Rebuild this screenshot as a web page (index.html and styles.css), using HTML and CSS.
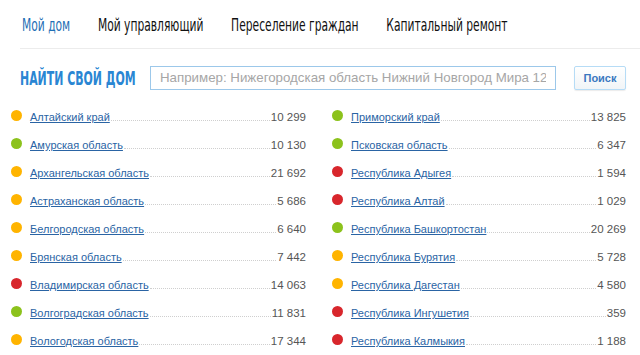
FILE: index.html
```html
<!DOCTYPE html>
<html lang="ru">
<head>
    <meta charset="utf-8">
    <title>Реформа ЖКХ</title>
    <link rel="stylesheet" href="styles.css">
</head>
<body>
    <nav class="topMenu">
        <div class="menuList">
            <a class="menuItem active" href="#">Мой дом</a>
            <a class="menuItem" href="#">Мой управляющий</a>
            <a class="menuItem" href="#">Переселение граждан</a>
            <a class="menuItem" href="#">Капитальный ремонт</a>
        </div>
    </nav>

    <div class="searchBar">
        <div class="searchTitleBox">
            <h1 class="searchTitle">НАЙТИ СВОЙ ДОМ</h1>
        </div>
        <input class="searchInput" type="text" placeholder="Например: Нижегородская область Нижний Новгород Мира 12">
        <button class="searchButton">Поиск</button>
    </div>

    <div class="regionList">
        <div class="regionColumn">
            <div class="regionRow"><span class="dot orange"></span><a href="#">Алтайский край</a><span class="leader"></span><span class="count">10 299</span></div>
            <div class="regionRow"><span class="dot green"></span><a href="#">Амурская область</a><span class="leader"></span><span class="count">10 130</span></div>
            <div class="regionRow"><span class="dot orange"></span><a href="#">Архангельская область</a><span class="leader"></span><span class="count">21 692</span></div>
            <div class="regionRow"><span class="dot orange"></span><a href="#">Астраханская область</a><span class="leader"></span><span class="count">5 686</span></div>
            <div class="regionRow"><span class="dot orange"></span><a href="#">Белгородская область</a><span class="leader"></span><span class="count">6 640</span></div>
            <div class="regionRow"><span class="dot orange"></span><a href="#">Брянская область</a><span class="leader"></span><span class="count">7 442</span></div>
            <div class="regionRow"><span class="dot red"></span><a href="#">Владимирская область</a><span class="leader"></span><span class="count">14 063</span></div>
            <div class="regionRow"><span class="dot green"></span><a href="#">Волгоградская область</a><span class="leader"></span><span class="count">11 831</span></div>
            <div class="regionRow"><span class="dot orange"></span><a href="#">Вологодская область</a><span class="leader"></span><span class="count">17 344</span></div>
        </div>
        <div class="regionColumn">
            <div class="regionRow"><span class="dot green"></span><a href="#">Приморский край</a><span class="leader"></span><span class="count">13 825</span></div>
            <div class="regionRow"><span class="dot green"></span><a href="#">Псковская область</a><span class="leader"></span><span class="count">6 347</span></div>
            <div class="regionRow"><span class="dot red"></span><a href="#">Республика Адыгея</a><span class="leader"></span><span class="count">1 594</span></div>
            <div class="regionRow"><span class="dot red"></span><a href="#">Республика Алтай</a><span class="leader"></span><span class="count">1 029</span></div>
            <div class="regionRow"><span class="dot green"></span><a href="#">Республика Башкортостан</a><span class="leader"></span><span class="count">20 269</span></div>
            <div class="regionRow"><span class="dot orange"></span><a href="#">Республика Бурятия</a><span class="leader"></span><span class="count">5 728</span></div>
            <div class="regionRow"><span class="dot orange"></span><a href="#">Республика Дагестан</a><span class="leader"></span><span class="count">4 580</span></div>
            <div class="regionRow"><span class="dot red"></span><a href="#">Республика Ингушетия</a><span class="leader"></span><span class="count">359</span></div>
            <div class="regionRow"><span class="dot red"></span><a href="#">Республика Калмыкия</a><span class="leader"></span><span class="count">1 188</span></div>
        </div>
    </div>
</body>
</html>
```

FILE: styles.css
```css
body {
    margin: 0;
    background-color: #ffffff;
    font-family: "Liberation Sans", Arial, sans-serif;
    overflow: hidden;
}

/* no condensed face installed, so the menu and the title are narrowed by hand */
.topMenu {
    display: flex;
    height: 49px;
    align-items: center;
    margin-left: 20px;
    padding-left: 2px;
    border-bottom: 1px solid #ececec;
    box-sizing: border-box;
}

.menuList {
    display: flex;
    gap: 44px;
    transform: scaleX(0.63);
    transform-origin: left center;
}

.menuItem {
    font-family: "DejaVu Sans", sans-serif;
    font-size: 17px;
    color: #111111;
    text-decoration: none;
    white-space: nowrap;
    padding-top: 1px;
}

.menuItem.active {
    color: #1f6fb5;
}

.searchBar {
    display: flex;
    align-items: center;
    height: 57px;
    padding: 0 14px 0 20px;
}

.searchTitleBox {
    flex: none;
    width: 130px;
}

.searchTitle {
    margin: 0;
    font-family: "DejaVu Sans", sans-serif;
    font-size: 19px;
    font-weight: bold;
    color: #2a86d3;
    white-space: nowrap;
    transform: scaleX(0.575);
    transform-origin: left center;
}

.searchInput {
    width: 406px;
    height: 24px;
    box-sizing: border-box;
    border: 1px solid #9cc8ea;
    padding: 0 9px;
    font-family: "Liberation Sans", Arial, sans-serif;
    font-size: 13.3px;
    color: #333333;
    outline: none;
}

.searchInput::placeholder {
    color: #a6a6a6;
}

.searchButton {
    margin-left: 18px;
    width: 52px;
    height: 24px;
    border: 1px solid #b6dcf6;
    border-radius: 2px;
    background: linear-gradient(#ffffff, #f1f4f7);
    box-shadow: 0 1px 1px rgba(0, 0, 0, 0.08);
    font-family: "Liberation Sans", Arial, sans-serif;
    font-size: 11px;
    font-weight: bold;
    color: #3a78c0;
    padding: 0;
}

.regionList {
    display: grid;
    grid-template-columns: 295px 294px;
    column-gap: 26px;
    padding: 3px 14px 0 11px;
}

.regionRow {
    display: flex;
    align-items: baseline;
    height: 28px;
    font-size: 11px;
    line-height: 16px;
}

.dot {
    flex: none;
    width: 11px;
    height: 11px;
    border-radius: 50%;
    margin-right: 8px;
    margin-bottom: -1px;
}

.dot.orange { background-color: #ffb400; }
.dot.green { background-color: #8cc21c; }
.dot.red { background-color: #d8262c; }

.regionRow a {
    color: #2a64a4;
    text-decoration: underline;
    white-space: nowrap;
}

.leader {
    flex: 1;
    border-bottom: 1px dotted #cfcfcf;
    margin: 0 1px;
}

.count {
    color: #555555;
    font-size: 11.5px;
}
```
